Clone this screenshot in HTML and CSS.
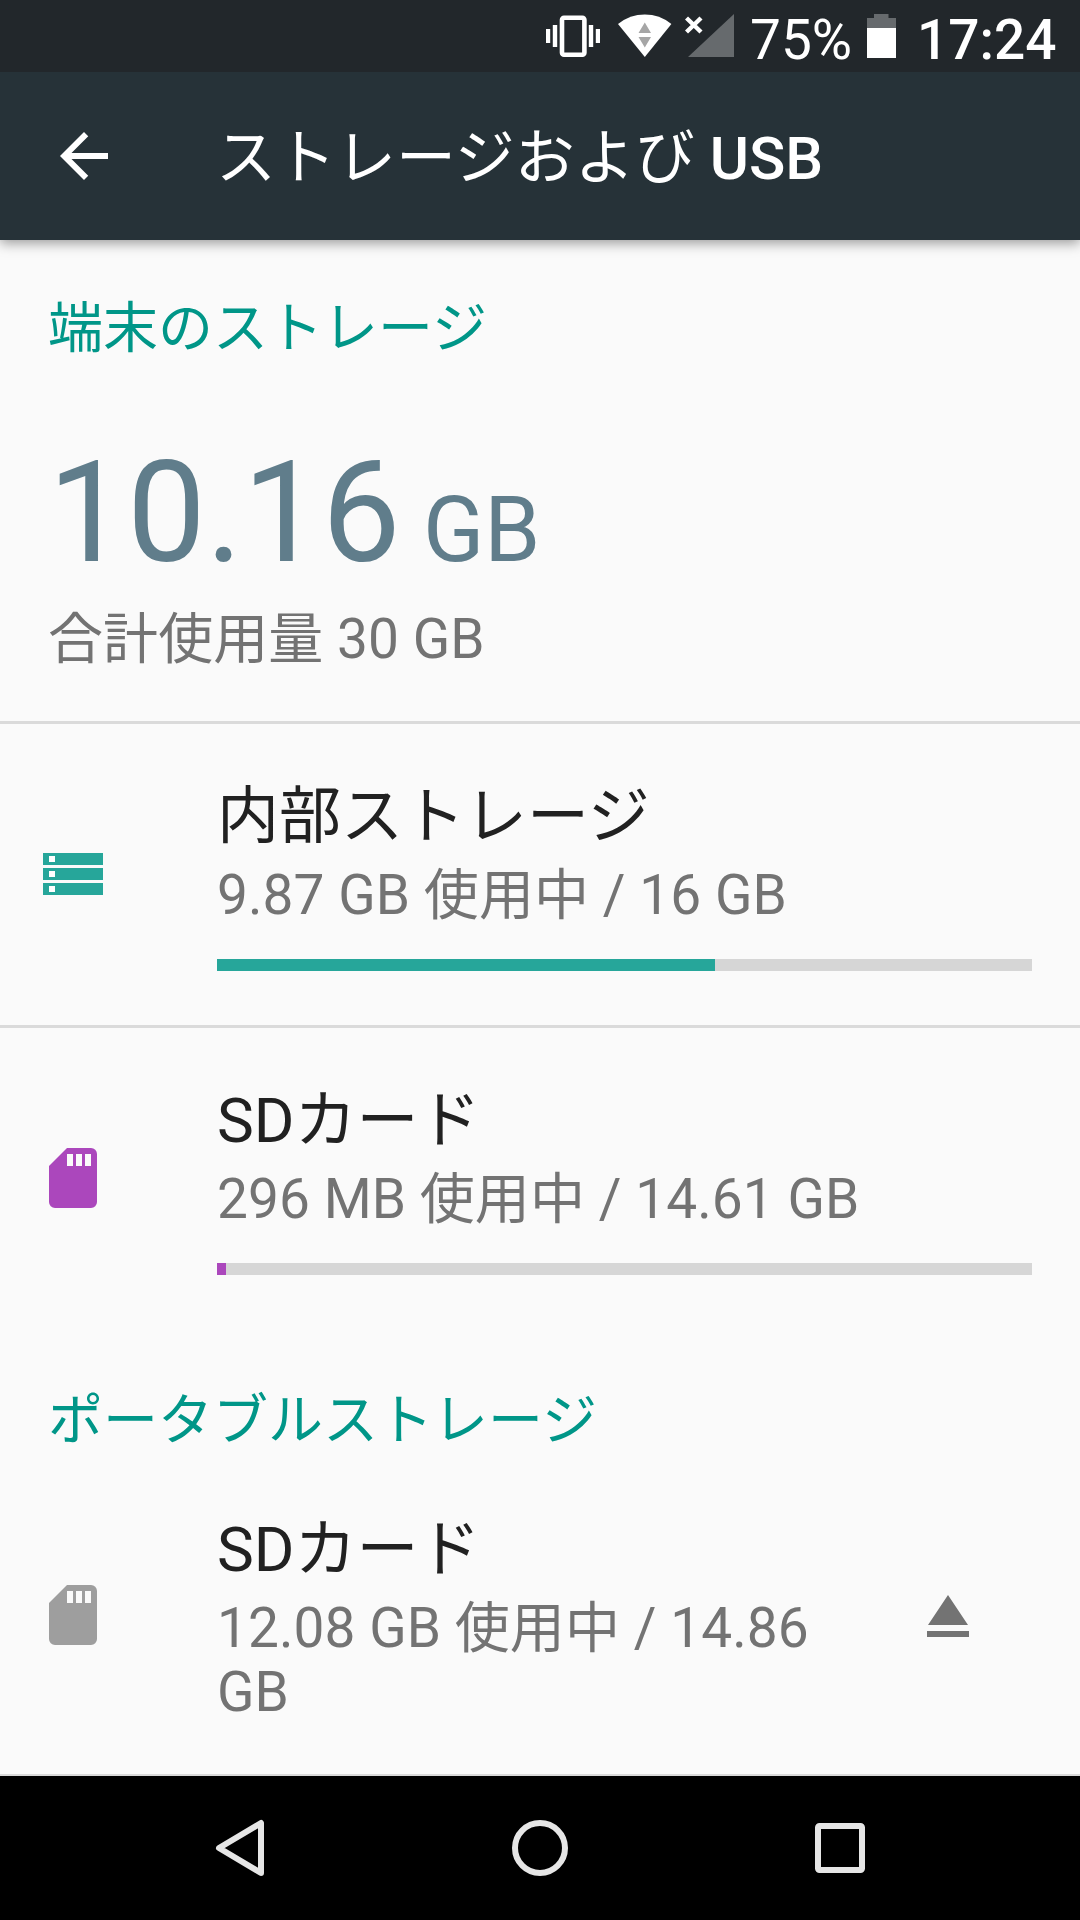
FILE: index.html
```html
<!DOCTYPE html>
<html lang="ja">
<head>
<meta charset="utf-8">
<title>ストレージおよび USB</title>
<link rel="stylesheet" href="styles.css">
</head>
<body>
<div class="screen">
  <div class="status-bar">
    <svg class="status-icon vibrate" width="54" height="44" viewBox="546 14 54 44">
      <rect x="562" y="17.8" width="22.4" height="37" rx="2" fill="none" stroke="#fff" stroke-width="4.6"/>
      <path fill="#fff" d="M546 29h4.2v14H546zM552.8 25h4.4v22h-4.4zM588.8 25h4.4v22h-4.4zM595.8 29h4.2v14h-4.2z"/>
    </svg>
    <svg class="status-icon wifi" width="54" height="44" viewBox="618 14 54 44">
      <path fill="#fff" d="M618 24Q630 14.6 644.8 14.6T671.4 24L644.8 57z"/>
      <path fill="#a6a6a6" d="M644.8 22.5L651 33h-12.5zM638.500 37H651l-6.2 10.500z"/>
    </svg>
    <svg class="status-icon signal" width="50" height="44" viewBox="685 14 50 44">
      <path fill="#666a6d" d="M734 14v43h-46z"/>
      <path fill="none" stroke="#fff" stroke-width="4.400" d="M686.500 18l14.500 14M701 18l-14.500 14"/>
    </svg>
    <span class="battery-level">75%</span>
    <svg class="status-icon battery" width="29" height="44" viewBox="867 14 29 44">
      <path fill="#666a6d" d="M874 14h14.500v4H896v10h-29V18h7z"/>
      <path fill="#fff" d="M867 28h29v30h-29z"/>
    </svg>
    <span class="clock">17:24</span>
  </div>

  <header class="app-bar">
    <svg width="72" height="72" viewBox="0 0 24 24"><path fill="#fff" d="M20 11H7.830l5.590-5.590L12 4l-8 8 8 8 1.410-1.410L7.830 13H20v-2z"/></svg>
    <h1 class="app-title">ストレージおよび <span class="latin">USB</span></h1>
  </header>

  <main class="content">
    <h2 class="section-title">端末のストレージ</h2>
    <section class="summary">
      <div class="total">10.16<span class="unit"> GB</span></div>
      <div class="caption">合計使用量 30 GB</div>
    </section>

    <section class="volume divided">
      <svg class="volume-icon" width="60" height="61" viewBox="0 0 60 61">
        <path fill="#26a69a" d="M0 9h60v12H0zM0 24h60v12H0zM0 39h60v12H0z"/>
        <path fill="#fff" d="M6 12h6v6H6zM6 27h6v6H6zM6 42h6v6H6z"/>
      </svg>
      <div class="volume-body">
        <div class="volume-name">内部ストレージ</div>
        <div class="volume-usage">9.87 GB 使用中 / 16 GB</div>
        <div class="meter"><div class="meter-fill internal" style="width:61.1%"></div></div>
      </div>
    </section>

    <section class="volume divided">
      <svg class="volume-icon" width="60" height="61" viewBox="0 0 60 61">
        <path fill="#ab47bc" fill-rule="evenodd" d="M24 0h24a6 6 0 0 1 6 6v48a6 6 0 0 1-6 6H12a6 6 0 0 1-6-6V18zM24 6v12h6V6zM33 6v12h6V6zM42 6v12h6V6z"/>
      </svg>
      <div class="volume-body">
        <div class="volume-name">SDカード</div>
        <div class="volume-usage">296 MB 使用中 / 14.61 GB</div>
        <div class="meter"><div class="meter-fill card" style="width:1.1%"></div></div>
      </div>
    </section>

    <h2 class="section-title portable">ポータブルストレージ</h2>
    <section class="volume removable">
      <svg class="volume-icon" width="60" height="61" viewBox="0 0 60 61">
        <path fill="#9e9e9e" fill-rule="evenodd" d="M24 0h24a6 6 0 0 1 6 6v48a6 6 0 0 1-6 6H12a6 6 0 0 1-6-6V18zM24 6v12h6V6zM33 6v12h6V6zM42 6v12h6V6z"/>
      </svg>
      <div class="volume-body">
        <div class="volume-name">SDカード</div>
        <div class="volume-usage">12.08 GB 使用中 / 14.86 GB</div>
      </div>
      <svg class="eject" width="42" height="43" viewBox="0 0 42 43"><path fill="#737373" d="M21 1l20 30H1zM0 37h42v6H0z"/></svg>
    </section>
  </main>

  <nav class="nav-bar">
    <svg width="60" height="60" viewBox="0 0 60 60"><path fill="none" stroke="#e6e6e6" stroke-width="6" stroke-linejoin="round" d="M51 5v50L9 30z"/></svg>
    <svg width="60" height="60" viewBox="0 0 60 60"><circle cx="30" cy="30" r="25" fill="none" stroke="#e6e6e6" stroke-width="6"/></svg>
    <svg width="60" height="60" viewBox="0 0 60 60"><rect x="8" y="8" width="44" height="44" rx="1.500" fill="none" stroke="#e6e6e6" stroke-width="6"/></svg>
  </nav>
</div>
</body>
</html>
```
FILE: styles.css
```css
* {
  box-sizing: border-box;
}

body {
  margin: 0;
  font-family: Roboto, "Noto Sans CJK JP", sans-serif;
  font-size: 55px;
  line-height: 64px;
  background: #fafafa;
}

svg {
  display: block;
  flex: none;
}

h1,
h2 {
  margin: 0;
  font-weight: 400;
}

.screen {
  width: 1080px;
  height: 1920px;
  display: flex;
  flex-direction: column;
  overflow: hidden;
}

/* Status bar */
.status-bar {
  height: 72px;
  flex: none;
  display: flex;
  align-items: flex-start;
  padding: 8px 0 0 546px;
  background: #22272b;
  color: #fff;
  white-space: nowrap;
}

.status-icon {
  margin-top: 6px;
}

.wifi {
  margin-left: 18px;
}

.signal {
  margin-left: 13px;
}

.battery-level {
  margin-left: 15px;
  width: 117px;
}

.clock {
  margin-left: 21px;
  font-weight: 500;
}

/* App bar */
.app-bar {
  height: 168px;
  flex: none;
  display: flex;
  align-items: center;
  padding-left: 48px;
  background: #263238;
  color: #fff;
  box-shadow: 0 3px 12px rgba(0, 0, 0, 0.4);
  clip-path: inset(0 0 -24px 0);
  z-index: 1;
}

.app-title {
  margin: 5px 0 0 96px;
  font-size: 60px;
  line-height: 71px;
}

.latin {
  font-weight: 500;
}

/* Storage list */
.content {
  flex: 1;
  min-height: 0;
  padding-top: 56px;
  background: #fafafa;
  border-bottom: 2px solid #dadada;
}

.section-title {
  padding-left: 48px;
  font-size: 55px;
  line-height: 64px;
  color: #009688;
}

.portable {
  padding-top: 59px;
  padding-bottom: 5px;
}

.summary {
  padding: 71px 48px 50px;
}

.total {
  font-size: 140.4px;
  line-height: 164px;
  color: #607d8b;
}

.unit {
  font-size: 90px;
  line-height: 90px;
}

.caption {
  margin-top: 12px;
  letter-spacing: 0.07px;
  color: #737373;
}

.volume {
  height: 301px;
  display: flex;
  padding: 0 48px 0 43px;
}

.divided {
  height: 304px;
  border-top: 3px solid #dadada;
}

.volume-icon {
  align-self: center;
}

.volume-body {
  flex: 1;
  margin-left: 114px;
  padding-top: 56px;
}

.volume-name {
  font-size: 62px;
  line-height: 73px;
  color: #212121;
}

.volume-usage {
  margin-top: 10px;
  letter-spacing: 0.07px;
  color: #737373;
}

.meter {
  height: 12px;
  margin-top: 32px;
  background: #d6d6d6;
}

.meter-fill {
  height: 100%;
}

.internal {
  background: #26a69a;
}

.card {
  background: #ab47bc;
}

.removable {
  height: 317px;
}

.eject {
  align-self: center;
  margin: 0 63px 0 57px;
}

/* Navigation bar */
.nav-bar {
  height: 144px;
  flex: none;
  display: flex;
  align-items: center;
  justify-content: center;
  gap: 240px;
  background: #000;
}
```
